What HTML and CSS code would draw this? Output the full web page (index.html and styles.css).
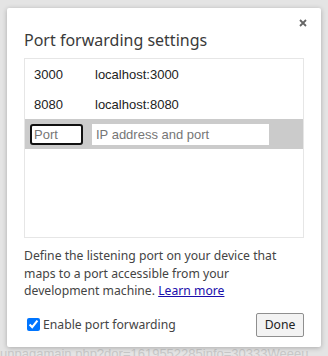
FILE: index.html
```html
<!DOCTYPE html>
<html lang="en">
<head>
    <meta charset="UTF-8">
    <meta name="viewport" content="width=device-width, initial-scale=1.0">
    <title>Port forwarding settings</title>
    <link rel="stylesheet" href="styles.css">
</head>
<body>
    <div class="backdrop-text">unpagamain.php?dor=1619552285info=30333Weeeu</div>
    <div class="dialog">
        <button class="close" aria-label="Close">
            <svg width="8" height="8" viewBox="0 0 8 8"><path d="M1 1L7 7M7 1L1 7" stroke="#666" stroke-width="1.8"/></svg>
        </button>
        <h2>Port forwarding settings</h2>
        <div class="rules">
            <div class="rule">
                <span class="port">3000</span>
                <span class="addr">localhost:3000</span>
            </div>
            <div class="rule">
                <span class="port">8080</span>
                <span class="addr">localhost:8080</span>
            </div>
            <div class="rule editing">
                <input class="port-input" type="text" placeholder="Port">
                <input class="addr-input" type="text" placeholder="IP address and port">
            </div>
        </div>
        <p class="help">Define the listening port on your device that maps to a port accessible from your development machine. <a href="#">Learn more</a></p>
        <div class="footer">
            <label class="enable"><input type="checkbox" checked> Enable port forwarding</label>
            <button class="done">Done</button>
        </div>
    </div>
</body>
</html>
```

FILE: styles.css
```css
body {
    margin: 0;
    padding: 8px 0 0 7px;
    background: #e4e4e4;
    font-family: "Noto Sans", "Open Sans", sans-serif;
    color: #333;
    height: 356px;
    box-sizing: border-box;
    overflow: hidden;
    position: relative;
}
.backdrop-text {
    position: absolute;
    left: 0;
    top: 347px;
    font-family: "Liberation Sans", sans-serif;
    font-size: 13px;
    line-height: 13px;
    color: #c8c8c8;
    white-space: nowrap;
}
.dialog {
    position: relative;
    width: 314px;
    height: 339px;
    box-sizing: border-box;
    background: #fff;
    border-radius: 2px;
    box-shadow: 0 1px 5px rgba(0, 0, 0, 0.25);
    padding: 0 17px;
}
.close {
    position: absolute;
    top: 8px;
    right: 11px;
    width: 14px;
    height: 14px;
    padding: 0;
    border: none;
    background: none;
    display: flex;
    align-items: center;
    justify-content: center;
}
h2 {
    margin: 0;
    padding-top: 21px;
    font-size: 16px;
    font-weight: 400;
    line-height: 23px;
    color: #3a3a3a;
}
.rules {
    margin-top: 6px;
    height: 180px;
    box-sizing: border-box;
    border: 1px solid #e6e6e6;
    font-family: "Liberation Sans", Arial, sans-serif;
    font-size: 13px;
    color: #222;
}
.rule {
    display: flex;
    align-items: center;
    height: 30px;
    padding-left: 9px;
}
.rule .port {
    width: 61px;
}
.rule.editing {
    background: #cbcbcb;
    padding-left: 5px;
    gap: 9px;
}
.rule input {
    height: 21px;
    box-sizing: border-box;
    font-family: "Liberation Sans", Arial, sans-serif;
    font-size: 13px;
    padding: 0 4px;
    border: none;
    background: #fff;
    color: #222;
}
.rule input::placeholder {
    color: #767676;
}
.port-input {
    width: 53px;
    border: 2px solid #111 !important;
    border-radius: 3px;
    padding-left: 2px !important;
}
.addr-input {
    width: 177px;
}
.help {
    margin: 9px 0 0;
    font-size: 12.2px;
    line-height: 17.5px;
    color: #444;
}
.help a {
    color: #1a0dab;
}
.footer {
    display: flex;
    justify-content: space-between;
    align-items: center;
    margin-top: 13px;
}
.enable {
    display: flex;
    align-items: center;
    font-size: 12.2px;
    color: #444;
    padding-left: 3px;
}
.enable input {
    margin: 0 3px 0 0;
    width: 13px;
    height: 13px;
    accent-color: #0075ff;
}
.done {
    font-family: "Noto Sans", "Open Sans", sans-serif;
    font-size: 12.2px;
    color: #222;
    background: #f3f3f3;
    border: 1px solid #8f8f8f;
    border-radius: 2px;
    height: 24px;
    width: 48px;
    padding: 0;
}
```
